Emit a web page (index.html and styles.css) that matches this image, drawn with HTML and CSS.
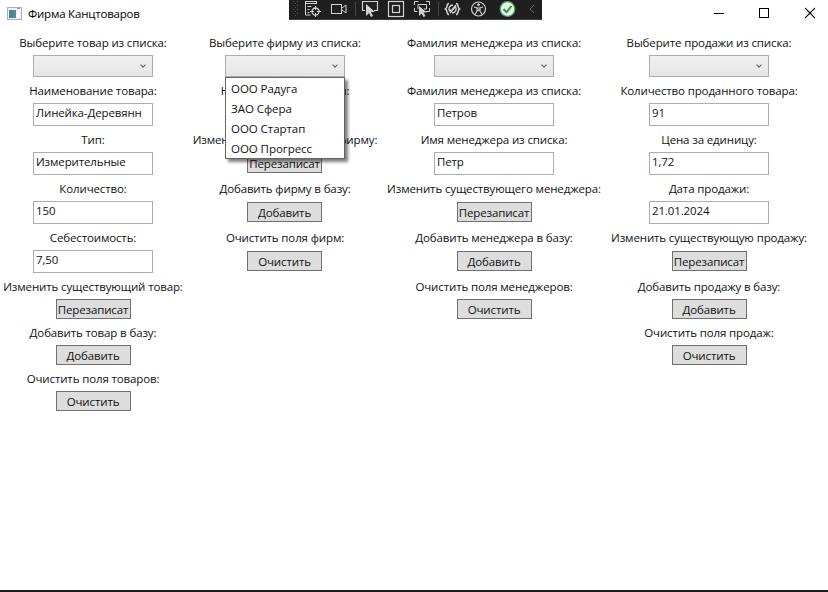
FILE: index.html
```
<!DOCTYPE html>
<html lang="ru">
<head>
<meta charset="utf-8">
<title>Фирма Канцтоваров</title>
<link rel="stylesheet" href="styles.css">
</head>
<body>
<div class="window">
  <header class="titlebar">
    <svg class="app-icon" width="15" height="13" viewBox="0 0 15 13"><rect x=".5" y=".5" width="14" height="12" fill="#eef0f3" stroke="#a9b1ba"/><rect x="2" y="3" width="7" height="8" fill="#3f8c80"/><rect x="6" y="3" width="3" height="8" fill="#5a86a5"/><rect x="10" y="3" width="3" height="8" fill="#fff"/><path d="M10 1.500h3" stroke="#8b9bb0"/></svg>
    <h1 class="title">Фирма Канцтоваров</h1>
    <div class="controls">
      <svg width="10" height="12" viewBox="0 0 10 12"><path d="M0 6.500h10" stroke="#000"/></svg>
      <svg width="10" height="12" viewBox="0 0 10 12"><rect x=".5" y="1.500" width="9" height="9" fill="none" stroke="#000"/></svg>
      <svg class="close" width="10" height="12" viewBox="0 0 10 12"><path d="M0 1l10 10M10 1L0 11" stroke="#000" stroke-width="1.100"/></svg>
    </div>
  </header>

  <div class="debugbar">
    <svg width="253" height="20" viewBox="0 0 253 20" fill="none" stroke="#d2d2d2">
      <path d="M4.500 1v16M8.500 1v16" stroke="#555" stroke-dasharray="1 3"/><path d="M6.500 3v14" stroke="#555" stroke-dasharray="1 3"/>
      <path d="M16 1.500h12M16 3.500h12" /><path d="M16.500 1v14h5M18.500 6.500h4M18.500 9.500h2M18.500 12.500h2M27.500 2v2"/>
      <circle cx="26.500" cy="11.500" r="3.500" stroke-width="1.300"/><path d="M26.500 6v4M26.500 13v4M21 11.500h4M28 11.500h4"/>
      <rect x="42.500" y="4.500" width="10" height="9"/><path d="M53 8l4-3v8l-4-3"/>
      <path d="M66.500 2v14M149.500 2v14M213.500 2v14" stroke="#454545"/>
      <path d="M76 10.500h-2.500V1.500h15v9H85" stroke-width="1.200"/><path d="M77 4v12l3-3 2 4 2-1-2-4h4z" fill="#d2d2d2" stroke="none"/>
      <rect x="99.500" y="1.500" width="15" height="15" stroke-width="1.200"/><rect x="103.500" y="5.500" width="7" height="7" stroke-width="1.200"/>
      <path d="M125.500 5V1.500h4M137 1.500h3.500V5M125.500 8v3.500h3M140.500 8v3.500H137M129 9V4.500h8.500V9H135"/><path d="M130 6v10l2.500-2.500 2 3.500 2-1-2-3.500h3.500z" fill="#d2d2d2" stroke="none"/>
      <path d="M160 3.500c-3 0-1 4-3.500 5.500 2.500 1.500.5 5.500 3.500 5.500M167 3.500c3 0 1 4 3.500 5.500-2.500 1.500-.5 5.500-3.500 5.500" stroke-width="1.500"/><path d="M160.500 11.500c-1.500-3 0-6.500 3.500-6.500M166.500 6.500c1.500 3 0 6.500-3.500 6.500M160 9l2 2 5-6M161 13l6-7" stroke-width="1.300"/>
      <circle cx="189.500" cy="9" r="7" stroke-width="1.200"/><circle cx="189.500" cy="4.700" r="1" fill="#d2d2d2"/><path d="M185 7l3 1v3l-2 3.500M194 7l-3 1v3l2 3.500M188 8h3M188 11l1.500-1 1.500 1" stroke-width="1.100"/>
      <circle cx="218.500" cy="9" r="7.300" fill="#e7f5e7" stroke="#54a45f" stroke-width="1.300"/><path d="M214.500 9l3 3.300 5-6.300" stroke="#35934a" stroke-width="2"/>
      <path d="M245 5l-4 4 4 4" stroke="#6a6a6a"/>
    </svg>
  </div>

  <main class="form">
    <label class="label c1 r1">Выберите товар из списка:</label>
    <label class="label c2 r1">Выберите фирму из списка:</label>
    <label class="label c3 r1">Фамилия менеджера из списка:</label>
    <label class="label c4 r1">Выберите продажи из списка:</label>

    <div class="combo c1 r2"><i class="arrow"></i></div>
    <div class="combo c2 r2"><i class="arrow"></i>
      <ul class="menu"><li>ООО Радуга</li><li>ЗАО Сфера</li><li>ООО Стартап</li><li>ООО Прогресс</li></ul>
    </div>
    <div class="combo c3 r2"><i class="arrow"></i></div>
    <div class="combo c4 r2"><i class="arrow"></i></div>

    <label class="label c1 r3">Наименование товара:</label>
    <label class="label c2 r3">Наименование фирмы:</label>
    <label class="label c3 r3">Фамилия менеджера из списка:</label>
    <label class="label c4 r3">Количество проданного товара:</label>

    <div class="field c1 r4">Линейка-Деревянн</div>
    <div class="field c2 r4"></div>
    <div class="field c3 r4">Петров</div>
    <div class="field c4 r4">91</div>

    <label class="label c1 r5">Тип:</label>
    <label class="label c2 r5">Изменить существующую фирму:</label>
    <label class="label c3 r5">Имя менеджера из списка:</label>
    <label class="label c4 r5">Цена за единицу:</label>

    <div class="field c1 r6">Измерительные</div>
    <button class="button c2 r6">Перезаписат</button>
    <div class="field c3 r6">Петр</div>
    <div class="field c4 r6">1,72</div>

    <label class="label c1 r7">Количество:</label>
    <label class="label c2 r7">Добавить фирму в базу:</label>
    <label class="label c3 r7">Изменить существующего менеджера:</label>
    <label class="label c4 r7">Дата продажи:</label>

    <div class="field c1 r8">150</div>
    <button class="button c2 r8">Добавить</button>
    <button class="button c3 r8">Перезаписат</button>
    <div class="field c4 r8">21.01.2024</div>

    <label class="label c1 r9">Себестоимость:</label>
    <label class="label c2 r9">Очистить поля фирм:</label>
    <label class="label c3 r9">Добавить менеджера в базу:</label>
    <label class="label c4 r9">Изменить существующую продажу:</label>

    <div class="field c1 r10">7,50</div>
    <button class="button c2 r10">Очистить</button>
    <button class="button c3 r10">Добавить</button>
    <button class="button c4 r10">Перезаписат</button>

    <label class="label c1 r11">Изменить существующий товар:</label>
    <label class="label c3 r11">Очистить поля менеджеров:</label>
    <label class="label c4 r11">Добавить продажу в базу:</label>

    <button class="button c1 r12">Перезаписат</button>
    <button class="button c3 r12">Очистить</button>
    <button class="button c4 r12">Добавить</button>

    <label class="label c1 r13">Добавить товар в базу:</label>
    <label class="label c4 r13">Очистить поля продаж:</label>

    <button class="button c1 r14">Добавить</button>
    <button class="button c4 r14">Очистить</button>

    <label class="label c1 r15">Очистить поля товаров:</label>
    <button class="button c1 r16">Очистить</button>
  </main>
</div>
</body>
</html>
```
FILE: styles.css
```
* { box-sizing: border-box; }
body { margin: 0; background: #fff; }
.window {
  position: relative;
  width: 828px;
  height: 592px;
  overflow: hidden;
  border-bottom: 2px solid #1c1a1c;
  background: #fff;
  color: #111;
  font: 11.5px/16px "Open Sans", "Noto Sans", sans-serif;
  letter-spacing: -0.13px;
}
.titlebar { display: flex; align-items: center; height: 29px; padding: 0 13px 3px 7px; }
.title { margin: 2px 0 0 6px; font-size: 11.5px; font-weight: 400; letter-spacing: -0.2px; color: #000; }
.controls { display: flex; gap: 35px; margin-left: auto; }
.close { margin-left: 1px; }
.debugbar {
  position: absolute;
  left: 289px;
  top: 0;
  width: 253px;
  height: 20px;
  background: #1f1f1f;
  border-bottom: 1px solid #3d3d3d;
}
.debugbar svg { display: block; }
.form {
  display: grid;
  grid-template-columns: 186px 198px 220px 210px;
  grid-template-rows: 26px 22px 26px 23px 26px 23px 26px 23px 26px 23px 26px 20px 26px 20px 26px 20px;
  justify-items: center;
}
.label { padding-top: 6px; white-space: nowrap; }
.combo {
  position: relative;
  display: flex;
  justify-content: flex-end;
  width: 120px;
  height: 22px;
  padding: 7px 7px 0 0;
  border: 1px solid #acacac;
  background: linear-gradient(#f0f0f0, #e5e5e5);
}
.arrow { width: 4px; height: 4px; border: solid #606060; border-width: 0 1px 1px 0; transform: rotate(45deg); }
.menu {
  position: absolute;
  z-index: 2;
  left: -1px;
  top: 21px;
  width: 120px;
  height: 82px;
  margin: 0;
  padding: 1px 0;
  list-style: none;
  border: 1px solid #646464;
  background: #fff;
  box-shadow: 3px 3px 3px rgba(0, 0, 0, .5);
}
.menu li { height: 20px; padding: 2px 5px; letter-spacing: -0.05px; }
.field {
  width: 120px;
  height: 23px;
  padding: 1px 2px;
  overflow: hidden;
  white-space: nowrap;
  border: 1px solid #abadb3;
}
.button {
  width: 75px;
  height: 20px;
  padding: 2px 0 0;
  overflow: hidden;
  border: 1px solid #707070;
  background: #ddd;
  color: #111;
  font: inherit;
  letter-spacing: inherit;
  line-height: 16px;
  white-space: nowrap;
}
.button.r6, .button.r8, .button.r10 { margin-top: 1px; }
.button.c2 { margin-right: 1px; }
.c1 { grid-column: 1; }
.c2 { grid-column: 2; }
.c3 { grid-column: 3; }
.c4 { grid-column: 4; }
.r1 { grid-row: 1; }
.r2 { grid-row: 2; }
.r3 { grid-row: 3; }
.r4 { grid-row: 4; }
.r5 { grid-row: 5; }
.r6 { grid-row: 6; }
.r7 { grid-row: 7; }
.r8 { grid-row: 8; }
.r9 { grid-row: 9; }
.r10 { grid-row: 10; }
.r11 { grid-row: 11; }
.r12 { grid-row: 12; }
.r13 { grid-row: 13; }
.r14 { grid-row: 14; }
.r15 { grid-row: 15; }
.r16 { grid-row: 16; }
```
